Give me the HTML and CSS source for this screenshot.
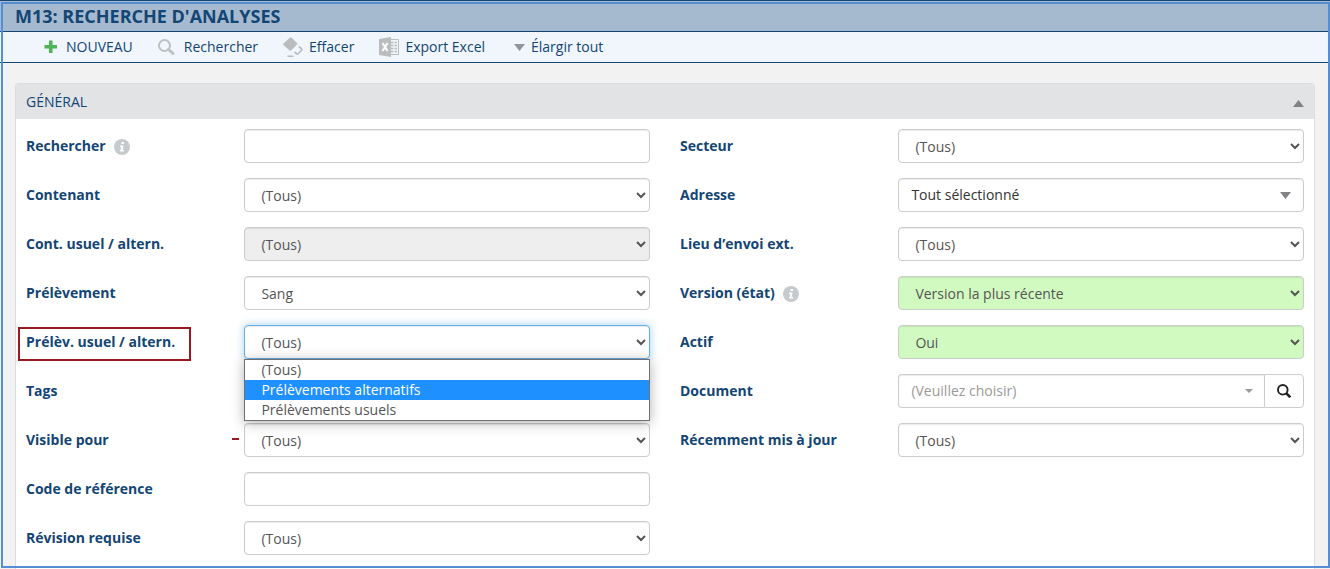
FILE: index.html
```html
<!DOCTYPE html>
<html lang="fr">
<head>
<meta charset="utf-8">
<meta name="viewport" content="width=device-width, initial-scale=1">
<title>M13: Recherche d'analyses</title>
<link rel="stylesheet" href="styles.css">
</head>
<body>
<header class="page-header">
  <h1 class="page-title">M13: RECHERCHE D'ANALYSES</h1>
</header>
<nav class="toolbar">
  <button type="button" class="tool">
    <svg class="tool-icon" viewBox="0 0 20 20"><path fill="#4db457" d="M9 3.500h3.500v4.500h4.500v3.500h-4.500v4.500H9v-4.500H4.500V8H9z"/></svg>
    NOUVEAU
  </button>
  <button type="button" class="tool">
    <svg class="tool-icon" viewBox="0 0 20 20"><circle cx="6.500" cy="8.500" r="5.500" fill="none" stroke="#bdbfc1" stroke-width="2"/><path d="M10.500 12.500l4.500 4" stroke="#bdbfc1" stroke-width="3" stroke-linecap="round"/></svg>
    Rechercher
  </button>
  <button type="button" class="tool">
    <svg class="tool-icon" viewBox="0 0 20 20"><path fill="#babcbe" d="M7 .5q.8-.5 1.600.2L14 6q.8.8 0 1.600L8.200 13.400q-.8.700-1.600 0L.5 8q-.8-.8 0-1.600z"/><path fill="none" stroke="#babcbe" stroke-width="1.700" d="M16 9.500l2.300 2q.9 1 0 2l-3 3q-1 .9-2 0L11.500 15M4.500 19.300h6"/></svg>
    Effacer
  </button>
  <button type="button" class="tool">
    <svg class="tool-icon" viewBox="0 0 20 20"><path fill="#babcbe" d="M0 2l12-2v20L0 18z"/><path fill="none" stroke="#babcbe" d="M12 2.500h7.500v15H12"/><path stroke="#babcbe" stroke-width="1.500" d="M12 5.500h2.500m1 0H18M12 8.500h2.500m1 0H18M12 11.500h2.500m1 0H18M12 14.500h2.500m1 0H18"/><path fill="none" stroke="#fff" stroke-width="2" d="M3.500 6l5 8m0-8l-5 8"/></svg>
    Export Excel
  </button>
  <button type="button" class="tool">
    <svg class="tool-icon tool-icon-narrow" viewBox="0 0 15 20"><path fill="#939598" d="M4 7h11l-5.500 7z"/></svg>
    Élargir tout
  </button>
</nav>
<main class="content">
  <section class="panel">
    <button type="button" class="panel-header" aria-expanded="true">
      GÉNÉRAL
      <svg class="caret" viewBox="0 0 11 7"><path fill="#808285" d="M0 7h11L5.500 0z"/></svg>
    </button>
    <form class="panel-body">
      <div class="column">
        <div class="field">
          <label class="field-label" for="search">Rechercher
            <svg class="info" viewBox="0 0 16 16"><circle cx="8" cy="8" r="8" fill="#c7cacc"/><path fill="#fff" d="M7.500 3h2.500v2H7.500zM6 6.500h3.500L8.700 11h1.300v1.500H6V11h.7L7.200 8H6z"/></svg>
          </label>
          <input class="control" type="text" id="search">
        </div>
        <div class="field">
          <label class="field-label" for="container">Contenant</label>
          <select class="control" id="container"><option>(Tous)</option></select>
        </div>
        <div class="field">
          <label class="field-label" for="container-use">Cont. usuel / altern.</label>
          <select class="control" id="container-use" disabled><option>(Tous)</option></select>
        </div>
        <div class="field">
          <label class="field-label" for="sample">Prélèvement</label>
          <select class="control" id="sample"><option>Sang</option></select>
        </div>
        <div class="field">
          <label class="field-label field-label-marked" for="sample-use">Prélèv. usuel / altern.</label>
          <div class="control-wrap">
            <select class="control control-active" id="sample-use"><option>(Tous)</option><option>Prélèvements alternatifs</option><option>Prélèvements usuels</option></select>
            <ul class="menu" role="listbox" aria-label="Prélèv. usuel / altern.">
              <li class="menu-item" role="option" aria-selected="false">(Tous)</li>
              <li class="menu-item menu-item-hover" role="option" aria-selected="true">Prélèvements alternatifs</li>
              <li class="menu-item" role="option" aria-selected="false">Prélèvements usuels</li>
            </ul>
          </div>
        </div>
        <div class="field">
          <label class="field-label" for="tags">Tags</label>
          <input class="control" type="text" id="tags">
        </div>
        <div class="field">
          <label class="field-label" for="visible">Visible pour</label>
          <div class="control-wrap control-wrap-dash">
            <select class="control" id="visible"><option>(Tous)</option></select>
          </div>
        </div>
        <div class="field">
          <label class="field-label" for="code">Code de référence</label>
          <input class="control" type="text" id="code">
        </div>
        <div class="field">
          <label class="field-label" for="revision">Révision requise</label>
          <select class="control" id="revision"><option>(Tous)</option></select>
        </div>
      </div>
      <div class="column">
        <div class="field">
          <label class="field-label" for="sector">Secteur</label>
          <select class="control" id="sector"><option>(Tous)</option></select>
        </div>
        <div class="field">
          <label class="field-label" for="address">Adresse</label>
          <button type="button" class="control picker" id="address">Tout sélectionné
            <svg class="caret" viewBox="0 0 11 7"><path fill="#808285" d="M0 0h11L5.500 7z"/></svg>
          </button>
        </div>
        <div class="field">
          <label class="field-label" for="external">Lieu d’envoi ext.</label>
          <select class="control" id="external"><option>(Tous)</option></select>
        </div>
        <div class="field">
          <label class="field-label" for="version">Version (état)
            <svg class="info" viewBox="0 0 16 16"><circle cx="8" cy="8" r="8" fill="#c7cacc"/><path fill="#fff" d="M7.500 3h2.500v2H7.500zM6 6.500h3.500L8.700 11h1.300v1.500H6V11h.7L7.200 8H6z"/></svg>
          </label>
          <select class="control control-set" id="version"><option>Version la plus récente</option></select>
        </div>
        <div class="field">
          <label class="field-label" for="active">Actif</label>
          <select class="control control-set" id="active"><option>Oui</option></select>
        </div>
        <div class="field">
          <label class="field-label" for="document">Document</label>
          <div class="input-group">
            <button type="button" class="control picker picker-empty" id="document">(Veuillez choisir)
              <svg class="caret-small" viewBox="0 0 8 4"><path fill="#999" d="M0 0h8L4 4z"/></svg>
            </button>
            <button type="button" class="control search-button" aria-label="Chercher un document">
              <svg class="search-icon" viewBox="0 0 14 14"><circle cx="5.800" cy="5.800" r="4.800" fill="none" stroke="#222" stroke-width="1.900"/><path d="M9 9l4.300 4.300" stroke="#222" stroke-width="2.500"/></svg>
            </button>
          </div>
        </div>
        <div class="field">
          <label class="field-label" for="updated">Récemment mis à jour</label>
          <select class="control" id="updated"><option>(Tous)</option></select>
        </div>
      </div>
    </form>
  </section>
</main>
<div class="frame"></div>
</body>
</html>
```

FILE: styles.css
```css
* {
  box-sizing: border-box;
}

body {
  display: flex;
  flex-direction: column;
  min-height: 100vh;
  margin: 0;
  background: #f2f2f2;
  color: #134575;
  font-family: "Open Sans", "Noto Sans", sans-serif;
  font-size: 14px;
  line-height: 20px;
}

button,
input,
select {
  font: inherit;
}

.page-header {
  padding: 4px 15px 3px;
  border-top: 1px solid #134575;
  border-bottom: 1px solid #134575;
  background: #a5bacf;
}

.page-title {
  margin: 0;
  font-size: 18px;
  font-weight: 700;
  line-height: 23px;
}

.toolbar {
  display: flex;
  gap: 25px;
  padding: 0 40px;
  border-bottom: 1px solid #134575;
  background: #f0f6fb;
}

.tool {
  display: flex;
  align-items: center;
  gap: 6px;
  height: 30px;
  padding: 0;
  border: 0;
  background: none;
  color: inherit;
  white-space: nowrap;
}

.tool-icon {
  width: 20px;
  height: 20px;
}

.tool-icon-narrow {
  width: 15px;
}

.content {
  display: flex;
  flex: 1;
  flex-direction: column;
  padding: 20px 15px 0;
}

.panel {
  flex: 1;
  border: 1px solid #dcddde;
  border-bottom: 0;
  border-radius: 4px 4px 0 0;
  background: #fff;
}

.panel-header {
  display: flex;
  align-items: center;
  justify-content: space-between;
  width: 100%;
  height: 35px;
  padding: 1px 10px 0;
  border: 0;
  border-radius: 3px 3px 0 0;
  background: #e2e3e5;
  color: inherit;
}

.caret {
  width: 11px;
  height: 7px;
}

.caret-small {
  width: 8px;
  height: 4px;
}

.panel-header .caret {
  margin-top: 2px;
}

.panel-body {
  display: grid;
  grid-template-columns: 1fr 1fr;
  gap: 30px;
  padding: 10px 10px 14px;
}

.column {
  display: flex;
  flex-direction: column;
  gap: 15px;
}

.field {
  display: grid;
  grid-template-columns: 35% 1fr;
}

.field-label {
  display: flex;
  align-items: center;
  gap: 8px;
  height: 34px;
  font-weight: 700;
}

.field-label-marked {
  justify-self: start;
  margin: 2px 0 -2px -8px;
  padding: 0 14px 4px 6px;
  border: 2px solid #9c1820;
}

.info {
  width: 16px;
  height: 16px;
  margin-top: 2px;
}

.control {
  width: 100%;
  height: 34px;
  padding: 6px 12px;
  border: 1px solid #ccc;
  border-radius: 4px;
  background-color: #fff;
  box-shadow: inset 0 1px 1px rgba(0, 0, 0, 0.08);
  color: #555;
}

.control:disabled {
  background-color: #eee;
  opacity: 1;
}

.control-set {
  background-color: #d1fac1;
}

.control-active {
  border-color: #66afe9;
  box-shadow: inset 0 1px 1px rgba(0, 0, 0, 0.08), 0 0 8px rgba(102, 175, 233, 0.6);
}

.control-wrap {
  position: relative;
}

.control-wrap-dash::before {
  content: "";
  position: absolute;
  top: 15px;
  left: -12px;
  width: 7px;
  height: 2px;
  background: #9c1820;
}

.menu {
  position: absolute;
  z-index: 1;
  top: 34px;
  right: 0;
  left: 0;
  margin: 0;
  padding: 0;
  border: 1px solid #6f7072;
  background: #fff;
  box-shadow: 0 2px 12px rgba(0, 0, 0, 0.3);
  color: #555;
  list-style: none;
}

.menu-item {
  padding: 0 16px;
}

.menu-item-hover {
  background: #1e90ff;
  color: #fff;
}

.picker {
  display: flex;
  align-items: center;
  justify-content: space-between;
  color: #333;
}

.picker-empty {
  color: #999;
}

.input-group {
  display: grid;
  grid-template-columns: 1fr 40px;
}

.input-group .picker {
  padding-right: 11px;
  border-right: 0;
  border-radius: 4px 0 0 4px;
}

.search-button {
  display: flex;
  align-items: center;
  justify-content: center;
  padding: 0;
  border-radius: 0 4px 4px 0;
  box-shadow: none;
}

.search-icon {
  width: 14px;
  height: 14px;
}

.frame {
  position: fixed;
  z-index: 2;
  inset: 2px 0 1px 1px;
  border: 2px solid #558ed5;
  pointer-events: none;
}
```
